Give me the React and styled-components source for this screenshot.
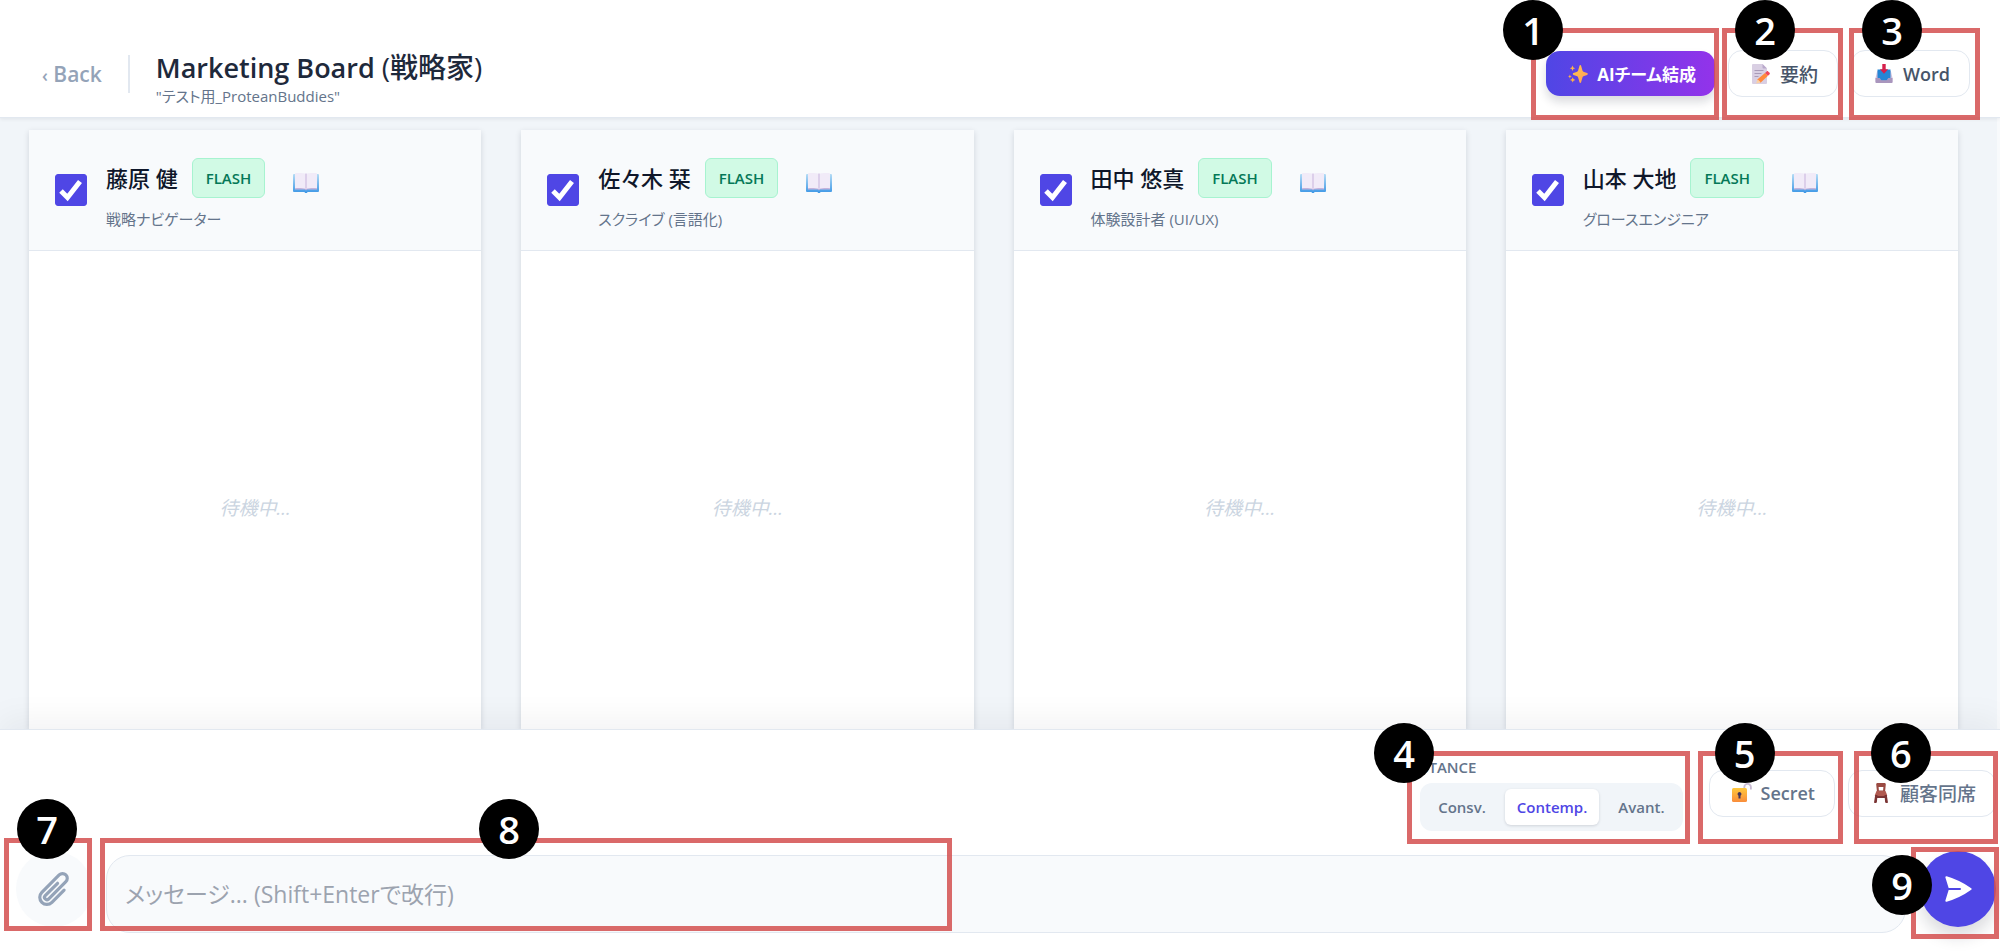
import { useState } from "react";
import styled, { createGlobalStyle, css } from "styled-components";

const GlobalStyle = createGlobalStyle`
  *, *::before, *::after {
    box-sizing: border-box;
  }

  body {
    margin: 0;
    background: #ffffff;
  }

  body, button, textarea {
    font-family: "Open Sans", "Noto Sans CJK JP", sans-serif;
    font-feature-settings: "palt";
  }
`;

const members = [
  { name: "藤原 健", role: "戦略ナビゲーター" },
  { name: "佐々木 栞", role: "スクライブ (言語化)" },
  { name: "田中 悠真", role: "体験設計者 (UI/UX)" },
  { name: "山本 大地", role: "グロースエンジニア" },
];

const stances = ["Consv.", "Contemp.", "Avant."];

const SparklesIcon = () => (
  <svg width="20" height="20" viewBox="0 0 20 20" aria-hidden="true">
    <defs>
      <linearGradient id="spark" x1="0" y1="0" x2="1" y2="1">
        <stop offset="0" stopColor="#ffc84a" />
        <stop offset="1" stopColor="#ff9a5c" />
      </linearGradient>
    </defs>
    <path
      fill="url(#spark)"
      d="M12.300 1c.4 0 .7.3.8.7l1.300 4.600c.3 1 .7 1.400 1.700 1.700l3 1.100c.9.3.9 1.500 0 1.800l-3 1.100c-1 .3-1.400.7-1.700 1.700l-1.300 4.600c-.2.9-1.400.9-1.600 0l-1.300-4.600c-.3-1-.7-1.400-1.700-1.700l-3-1.100c-.9-.3-.9-1.500 0-1.800l3-1.100c1-.3 1.400-.7 1.700-1.700l1.300-4.600c.1-.4.4-.7.8-.7z"
    />
    <path
      fill="#ffb347"
      d="M4.500 1.500l.8 1.900 1.900.8-1.900.8-.8 2-.8-2-1.900-.8 1.900-.8zM1.900 10.500l.6 1.400 1.300.5-1.300.6-.6 1.400-.6-1.400-1.300-.6 1.300-.5zM4.700 13.300l.8 1.800 1.900.8-1.900.8-.8 1.900-.8-1.900-1.900-.8 1.900-.8z"
    />
  </svg>
);

const MemoIcon = () => (
  <svg width="20" height="20" viewBox="0 0 20 20" aria-hidden="true">
    <path fill="#d9cfe3" d="M2 0h9.500L16 4.500V19a1 1 0 0 1-1 1H2a1 1 0 0 1-1-1V1a1 1 0 0 1 1-1z" />
    <path fill="#b9a9cb" d="M11.500 0L16 4.500h-3.500a1 1 0 0 1-1-1z" />
    <path stroke="#a99bb8" strokeWidth="1" d="M3.500 6.500h9M3.500 9.500h7M3.500 12.500h4" />
    <path fill="#ff8a3c" d="M14 9l3 2.800-7.500 7-3.500-3z" />
    <path fill="#f2475c" d="M14 9l1.700-1.600c.4-.4 1-.4 1.400 0l1.500 1.400c.4.400.4 1 0 1.400L17 11.800z" />
    <path fill="#fbd0a4" d="M6.500 15.300l3.200 2.900-4 1.200c-.3.100-.5-.1-.4-.4z" />
  </svg>
);

const InboxIcon = () => (
  <svg width="20" height="20" viewBox="0 0 20 20" aria-hidden="true">
    <path fill="#cfc0dc" d="M3.200 7h13.600L18.500 14v4a1 1 0 0 1-1 1h-15a1 1 0 0 1-1-1v-4z" />
    <path fill="#2486d6" d="M3.500 5.500h13v8.300l-4 3h-5l-4-3z" />
    <path fill="#a996bd" d="M1.500 14h4.300l1.500 2.300h5.400L14.200 14h4.300v4a1 1 0 0 1-1 1h-15a1 1 0 0 1-1-1z" />
    <path fill="#d61f4b" d="M8.300 0h3.400v5.200h2.500L10 9.800 5.800 5.200h2.500z" />
  </svg>
);

const BookIcon = () => (
  <svg width="26" height="20" viewBox="0 0 26 20" aria-hidden="true">
    <defs>
      <linearGradient id="cover" x1="0" y1="0" x2="0" y2="1">
        <stop offset="0" stopColor="#b5dcf5" />
        <stop offset="1" stopColor="#3f98e6" />
      </linearGradient>
    </defs>
    <path fill="url(#cover)" d="M0 2a1 1 0 0 1 1-1h24a1 1 0 0 1 1 1v16a1 1 0 0 1-1 1H14.500l-.5 1h-2l-.5-1H1a1 1 0 0 1-1-1z" />
    <path fill="#c4b3dc" d="M2 14h22v2.500H14l-1 1-1-1H2z" />
    <path fill="#f1ebf8" d="M2 1.200C2 .5 2.500.2 3.200.1 7-.2 10.500 0 13 .9c2.500-.9 6-1.100 9.800-.8.7.1 1.200.4 1.200 1.100v14c-4-.3-8-.2-11 .7-3-.9-7-1-11-.7z" />
    <path fill="#dccfea" d="M12 .6c.7.2 1.300.2 2 0v15l-1 .4-1-.4z" />
  </svg>
);

const UnlockIcon = () => (
  <svg width="20" height="20" viewBox="0 0 20 20" aria-hidden="true">
    <defs>
      <linearGradient id="lock" x1="0" y1="0" x2="0" y2="1">
        <stop offset="0" stopColor="#ffc93d" />
        <stop offset="1" stopColor="#f98d3b" />
      </linearGradient>
    </defs>
    <path fill="none" stroke="#c9bcd3" strokeWidth="1.800" d="M12.300 7V4.200a3.300 3.300 0 0 1 6.600 0V6.500" />
    <rect x="0" y="5" width="15" height="14" rx="1.500" fill="url(#lock)" />
    <path fill="#43355a" d="M7.500 9a2 2 0 0 1 1 3.700V15.500h-2v-2.800A2 2 0 0 1 7.500 9z" />
  </svg>
);

const ChairIcon = () => (
  <svg width="20" height="20" viewBox="0 0 20 20" aria-hidden="true">
    <path
      fill="#9a4a42"
      fillRule="evenodd"
      d="M5.200 1.500C5.100.7 5.700 0 6.500 0h7c.8 0 1.400.7 1.300 1.500L14 9H6zM7.600 4l.3 3.500h4.200l.3-3.500z"
    />
    <path fill="#b05a50" d="M5.500 8h9l1.700 4.300c.1.400-.2.700-.5.700H4.300c-.3 0-.6-.3-.5-.7z" />
    <path
      fill="#7a3434"
      d="M4.200 12h2.300l-.6 7c-.1.600-.5 1-1.100 1H4c-.6 0-1-.5-.9-1.100zM13.500 12h2.300l1.100 6.900c.1.600-.3 1.100-.9 1.100h-.8c-.6 0-1-.4-1.100-1zM6 13h8v2H6z"
    />
  </svg>
);

const ClipIcon = () => (
  <svg
    width="38"
    height="38"
    viewBox="0 0 24 24"
    fill="none"
    stroke="currentColor"
    strokeWidth="2"
    strokeLinecap="round"
    strokeLinejoin="round"
    aria-hidden="true"
  >
    <path d="m18.375 12.739-7.693 7.693a4.500 4.500 0 0 1-6.364-6.364l10.940-10.940A3 3 0 1 1 19.500 7.372L8.552 18.320m.009-.010-.010.010m5.699-9.941-7.810 7.810a1.500 1.500 0 0 0 2.112 2.130" />
  </svg>
);

const SendIcon = () => (
  <svg width="32" height="32" viewBox="0 0 24 24" fill="currentColor" aria-hidden="true">
    <path d="M3.478 2.404a.75.75 0 0 0-.926.941l2.432 7.905H13.500a.75.75 0 0 1 0 1.500H4.984l-2.432 7.905a.75.75 0 0 0 .926.940 60.519 60.519 0 0 0 18.445-8.986.75.75 0 0 0 0-1.218A60.517 60.517 0 0 0 3.478 2.404Z" />
  </svg>
);

// red frame with a numbered badge, laid over the control it wraps
const Guide = ({ number, frame, badge, grow, children }) => (
  <Target $grow={grow}>
    {children}
    <Frame $inset={frame}>
      <Badge $at={badge}>{number}</Badge>
    </Frame>
  </Target>
);

const MemberCard = ({ name, role }) => {
  const [checked, setChecked] = useState(true);

  return (
    <Card>
      <CardHeader>
        <Check>
          <CheckInput
            type="checkbox"
            aria-label={name}
            checked={checked}
            onChange={(e) => setChecked(e.target.checked)}
          />
          {checked && (
            <CheckMark viewBox="0 0 32 32" aria-hidden="true">
              <path d="M6 17l6.500 6.500L25 7.500" />
            </CheckMark>
          )}
        </Check>
        <div>
          <NameRow>
            <Name>{name}</Name>
            <Model>FLASH</Model>
            <BookButton aria-label="プロフィール">
              <BookIcon />
            </BookButton>
          </NameRow>
          <Role>{role}</Role>
        </div>
      </CardHeader>
      <CardBody>待機中...</CardBody>
    </Card>
  );
};

const App = () => {
  const [stance, setStance] = useState("Contemp.");
  const [message, setMessage] = useState("");

  return (
    <Page>
      <GlobalStyle />
      <Header>
        <Back href="#">
          <small>‹</small> Back
        </Back>
        <Divider />
        <Heading>
          <Title>
            Marketing Board <span>(戦略家)</span>
          </Title>
          <Subtitle>"テスト用_ProteanBuddies"</Subtitle>
        </Heading>
        <Actions>
          <Guide number={1} frame="-23px -4px -24px -15px" badge="-33px -33px">
            <TeamButton>
              <SparklesIcon />
              AIチーム結成
            </TeamButton>
          </Guide>
          <Guide number={2} frame="-22px -5px -23px -6px" badge="-33px 8px">
            <ActionButton $kanji>
              <MemoIcon />
              要約
            </ActionButton>
          </Guide>
          <Guide number={3} frame="-22px -10px -23px -2px" badge="-33px 8px">
            <ActionButton>
              <InboxIcon />
              Word
            </ActionButton>
          </Guide>
        </Actions>
      </Header>

      <Board>
        {members.map((member) => (
          <MemberCard key={member.name} {...member} />
        ))}
      </Board>

      <Footer>
        <Tools>
          <Guide number={4} frame="-4px -7px -13px -13px" badge="-33px -38px">
            <StanceLabel id="stance">STANCE</StanceLabel>
            <Segments role="group" aria-labelledby="stance">
              {stances.map((item) => (
                <Segment
                  key={item}
                  $active={item === stance}
                  onClick={() => setStance(item)}
                >
                  {item}
                </Segment>
              ))}
            </Segments>
          </Guide>
          <ToolButtons>
            <Guide number={5} frame="-19px -8px -27px -11px" badge="-33px 12px">
              <ActionButton $muted>
                <UnlockIcon />
                Secret
              </ActionButton>
            </Guide>
            <Guide number={6} frame="-19px -2px -27px 6px" badge="-33px 12px">
              <ActionButton $muted $kanji>
                <ChairIcon />
                顧客同席
              </ActionButton>
            </Guide>
          </ToolButtons>
        </Tools>
        <Composer>
          <Guide number={7} frame="-13px 0 -4px -12px" badge="-44px 8px">
            <AttachButton aria-label="添付">
              <ClipIcon />
            </AttachButton>
          </Guide>
          <Guide number={8} frame="-13px 53% 2px -6px" badge="-44px 374px" grow>
            <Message
              aria-label="メッセージ"
              placeholder="メッセージ... (Shift+Enterで改行)"
              value={message}
              onChange={(e) => setMessage(e.target.value)}
            />
          </Guide>
          <Guide number={9} frame="-4px -3px -12px -9px" badge="3px -44px">
            <SendButton aria-label="送信">
              <SendIcon />
            </SendButton>
          </Guide>
        </Composer>
      </Footer>
    </Page>
  );
};

const Page = styled.div`
  display: flex;
  flex-direction: column;
  height: 100vh;
  min-height: 600px;
  overflow: hidden;
`;

const Header = styled.header`
  position: relative;
  z-index: 1;
  display: flex;
  align-items: center;
  padding: 40px 30px 10px 42px;
  background: #ffffff;
  border-bottom: 1px solid #e2e8f0;
  box-shadow: 0 1px 4px rgba(15, 23, 42, 0.08);
`;

const Back = styled.a`
  padding-top: 2px;
  font-size: 21px;
  font-weight: 600;
  line-height: 32px;
  color: #94a3b8;
  text-decoration: none;
`;

const Divider = styled.span`
  width: 2px;
  height: 38px;
  margin: 0 26px;
  background: #e2e8f0;
`;

const Heading = styled.div`
  padding-top: 11px;
`;

const Title = styled.h1`
  margin: 0;
  font-size: 27px;
  font-weight: 600;
  line-height: 34px;
  color: #1e293b;

  span {
    font-size: 28px;
    font-weight: 500;
    line-height: 28px;
  }
`;

const Subtitle = styled.p`
  margin: 0;
  font-size: 15px;
  line-height: 22px;
  color: #64748b;
`;

const Actions = styled.div`
  display: flex;
  align-items: center;
  gap: 13px;
  margin-left: auto;
`;

const Target = styled.div`
  position: relative;

  ${(props) =>
    props.$grow &&
    css`
      flex: 1;
    `}
`;

const Frame = styled.div`
  position: absolute;
  z-index: 2;
  inset: ${(props) => props.$inset};
  border: 5px solid rgba(211, 79, 79, 0.85);
  pointer-events: none;
`;

const Badge = styled.span`
  position: absolute;
  inset: ${(props) => props.$at.split(" ")[0]} auto auto
    ${(props) => props.$at.split(" ")[1]};
  display: flex;
  align-items: center;
  justify-content: center;
  width: 60px;
  height: 60px;
  border-radius: 50%;
  background: #000000;
  color: #ffffff;
  font-size: 38px;
  font-weight: 600;
  line-height: 60px;
`;

const ActionButton = styled.button`
  display: flex;
  align-items: center;
  gap: 9px;
  height: 47px;
  padding: 0 19px 0 22px;
  border: 1px solid #e2e8f0;
  border-radius: 14px;
  background: #ffffff;
  color: ${(props) => (props.$muted ? "#64748b" : "#475569")};
  font-size: ${(props) => (props.$kanji ? "19px" : "18px")};
  font-weight: ${(props) => (props.$kanji ? 500 : 600)};
  white-space: nowrap;
  cursor: pointer;
`;

const TeamButton = styled(ActionButton)`
  height: 45px;
  border: none;
  background: linear-gradient(to right, #4f46e5, #9333ea);
  box-shadow: 0 6px 10px rgba(15, 23, 42, 0.15);
  color: #ffffff;
  font-size: 17px;
  font-weight: 700;
`;

const Board = styled.main`
  display: flex;
  flex: 1;
  gap: 40px;
  min-height: 0;
  padding: 12px 39px 0 29px;
  border-right: 3px solid #f8fafc;
  overflow: hidden;
  background: #f1f5f9;
`;

const Card = styled.section`
  display: flex;
  flex: 1;
  flex-direction: column;
  background: #ffffff;
  box-shadow: 0 2px 6px rgba(15, 23, 42, 0.14);
`;

const CardHeader = styled.div`
  display: flex;
  align-items: center;
  gap: 19px;
  padding: 19px 26px;
  border-bottom: 1px solid #e2e8f0;
  background: #f8fafc;
`;

const Check = styled.label`
  display: grid;
  width: 32px;
  height: 32px;
`;

const CheckInput = styled.input`
  grid-area: 1 / 1;
  width: 32px;
  height: 32px;
  margin: 0;
  border: 1px solid #4f46e5;
  border-radius: 3px;
  appearance: none;
  cursor: pointer;

  &:checked {
    background: #4f46e5;
  }
`;

const CheckMark = styled.svg`
  grid-area: 1 / 1;
  fill: none;
  stroke: #ffffff;
  stroke-width: 5;
  pointer-events: none;
`;

const NameRow = styled.div`
  display: flex;
  align-items: center;
  height: 58px;
`;

const Name = styled.h2`
  margin: 0;
  font-size: 22px;
  font-weight: 500;
  line-height: 32px;
  color: #0f172a;
`;

const Model = styled.span`
  margin-left: 14px;
  padding: 0 13px;
  border: 1px solid #a7f3d0;
  border-radius: 6px;
  background: #d1fae5;
  color: #047857;
  font-size: 15px;
  font-weight: 600;
  line-height: 38px;
`;

const BookButton = styled.button`
  display: flex;
  align-self: flex-end;
  margin-left: 16px;
  padding: 14px 12px;
  border: none;
  background: transparent;
  cursor: pointer;
`;

const Role = styled.p`
  margin: 0;
  font-size: 15px;
  line-height: 24px;
  color: #64748b;
`;

const CardBody = styled.div`
  display: flex;
  flex: 1;
  align-items: center;
  justify-content: center;
  padding-top: 34px;
  font-size: 19px;
  font-style: italic;
  color: #cbd5e1;
`;

const Footer = styled.footer`
  position: relative;
  z-index: 1;
  padding: 25px 4px 19px 16px;
  border-top: 1px solid #e2e8f0;
  background: #ffffff;
  box-shadow: 0 -10px 30px rgba(15, 23, 42, 0.05);
`;

const Tools = styled.div`
  display: flex;
  align-items: center;
  justify-content: flex-end;
  gap: 26px;
  margin-bottom: 20px;
`;

const StanceLabel = styled.div`
  margin-bottom: 4px;
  font-size: 15px;
  font-weight: 600;
  line-height: 24px;
  color: #64748b;
`;

const Segments = styled.div`
  display: flex;
  gap: 7px;
  padding: 6px;
  border-radius: 12px;
  background: #f1f5f9;
`;

const Segment = styled.button`
  height: 36px;
  padding: 0 12px;
  border: none;
  border-radius: 6px;
  background: transparent;
  color: #64748b;
  font-size: 15px;
  font-weight: 600;
  cursor: pointer;

  ${(props) =>
    props.$active &&
    css`
      background: #ffffff;
      box-shadow: 0 1px 3px rgba(15, 23, 42, 0.15);
      color: #4f46e5;
    `}
`;

const ToolButtons = styled.div`
  display: flex;
  gap: 13px;
`;

const Composer = styled.div`
  display: flex;
  align-items: flex-start;
  gap: 14px;
`;

const RoundButton = styled.button`
  display: flex;
  align-items: center;
  justify-content: center;
  width: 76px;
  height: 76px;
  padding: 0;
  border: none;
  border-radius: 50%;
  cursor: pointer;
`;

const AttachButton = styled(RoundButton)`
  background: #f8fafc;
  color: #94a3b8;
`;

const SendButton = styled(RoundButton)`
  background: #4f46e5;
  color: #ffffff;
  box-shadow: 0 10px 16px rgba(15, 23, 42, 0.15);
`;

const Message = styled.textarea`
  display: block;
  width: 100%;
  height: 78px;
  margin-top: 4px;
  padding: 19px 18px;
  border: 1px solid #e2e8f0;
  border-radius: 24px;
  outline: none;
  background: #f8fafc;
  color: #1e293b;
  font-size: 23px;
  line-height: 38px;
  resize: none;

  &::placeholder {
    color: #9ca3af;
  }
`;

export default App;
